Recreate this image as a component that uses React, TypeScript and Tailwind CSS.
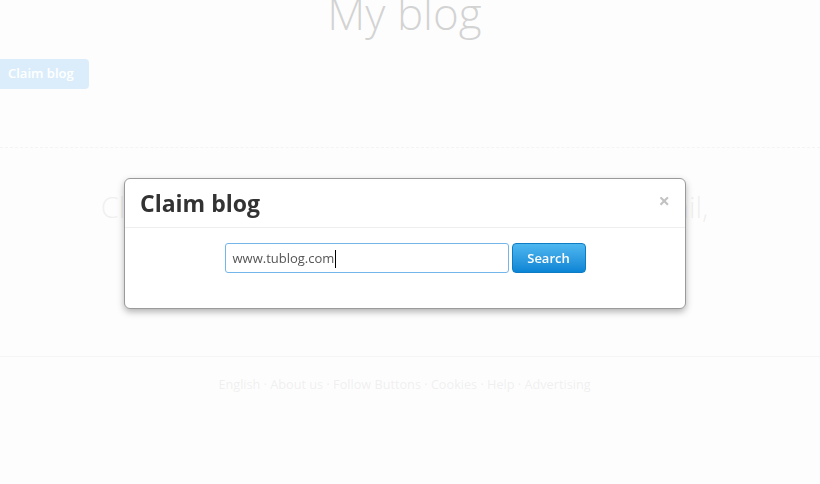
import React from 'react';

const footerLinks = ['English', 'About us', 'Follow Buttons', 'Cookies', 'Help', 'Advertising'];

export default function App() {
  return (
    <div className="relative min-h-[484px] w-full overflow-hidden bg-[#f6f6f6] font-['Open_Sans',sans-serif]">
      {/* page behind the backdrop */}
      <header className="flex h-[148px] flex-col border-b border-dashed border-[#c8c8c8]">
        <h1 className="-mt-[11px] pr-[11px] text-center text-[44px] font-light leading-[48px] text-[#262626]">My blog</h1>
        <div className="mt-[22px]">
          <button className="-ml-[4px] h-[30px] rounded-[4px] bg-[#4aa6e6] pl-[12px] pr-[15px] text-[13px] font-semibold text-white">
            Claim blog
          </button>
        </div>
      </header>

      <main className="h-[209px] border-b border-[#cdcdcd] pt-[41px]">
        <p className="pr-[11px] text-center text-[29px] font-light leading-[36px] text-[#b0b0b0]">
          Claim your blog now and get notified by e-mail,
        </p>
      </main>

      <footer className="pr-[11px] pt-[17px] text-center text-[12.7px] leading-[20px] text-[#b0b0b0]">
        {footerLinks.map((l, i) => (
          <span key={l}>
            {i > 0 && ' · '}
            <a>{l}</a>
          </span>
        ))}
      </footer>

      {/* backdrop */}
      <div className="fixed inset-0 bg-white/80" />

      {/* modal */}
      <div className="fixed left-[124px] top-[178px] w-[562px] rounded-[6px] border border-[#9a9a9a] bg-white shadow-[0_3px_7px_rgba(0,0,0,0.3)]">
        <div className="flex items-center justify-between border-b border-[#eeeeee] px-[15px] py-[9px]">
          <h3 className="text-[23px] font-bold leading-[30px] text-[#333]">Claim blog</h3>
          <button className="-mt-[4px] text-[20px] font-bold leading-[20px] text-[#c2c2c2]">×</button>
        </div>
        <div className="px-[15px] pb-[15px] pt-[15px]">
          <form className="mb-[20px] flex justify-center gap-[3px]">
            <div className="flex h-[30px] w-[284px] items-center rounded-[3px] border border-[#74b5ea] bg-white px-[7px] pt-px text-[13px] text-[#555]">
              <span>www.tublog.com</span>
              <span className="ml-[1px] h-[18px] w-px bg-black" />
            </div>
            <button className="h-[30px] w-[74px] rounded-[4px] border border-[#0d7cc4] bg-gradient-to-b from-[#4db7ef] to-[#0885d5] pt-px text-[13px] font-semibold text-white">
              Search
            </button>
          </form>
        </div>
      </div>
    </div>
  );
}
